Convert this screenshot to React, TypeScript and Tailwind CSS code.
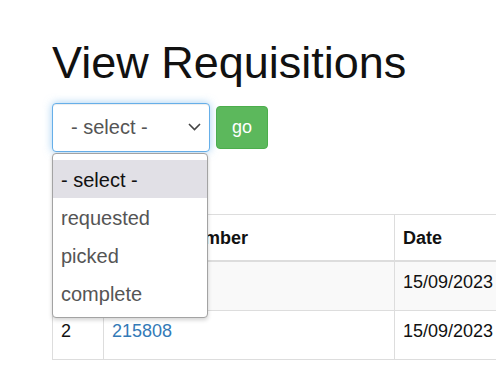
const options = ["- select -", "requested", "picked", "complete"];

const rows = [
  { n: 1, ref: "215809", date: "15/09/2023", status: "requested" },
  { n: 2, ref: "215808", date: "15/09/2023", status: "requested" },
];

function Chevron() {
  return (
    <svg width="13" height="8" viewBox="0 0 13 8" fill="none" className="shrink-0">
      <polyline points="1,1 6.5,6.5 12,1" stroke="#444" strokeWidth="1.6" />
    </svg>
  );
}

export default function App() {
  return (
    <div className="w-full overflow-hidden bg-white font-['Liberation_Sans',Arial,sans-serif] text-[#111]">
      <div className="pl-[52px] pt-[38px] pb-[22px]">
        <h1 className="text-[45px] font-normal leading-[49.5px]">View Requisitions</h1>

        <div className="mt-[15px] flex items-center gap-[6px]">
          <div className="relative">
            <div className="flex h-[49px] w-[158px] items-center justify-between rounded-[4px] border border-[#66afe9] bg-white pl-[18px] pr-[8px] text-[20px] text-[#555] shadow-[inset_0_1px_1px_rgba(0,0,0,0.075),0_0_8px_rgba(102,175,233,0.6)]">
              <span>- select -</span>
              <Chevron />
            </div>
            <ul className="absolute left-0 top-[50px] z-10 w-[156px] rounded-[4px] border border-[#a3a3a3] bg-white pt-[6px] pb-[5px] text-[20px] shadow-[0_2px_4px_rgba(0,0,0,0.18)]">
              {options.map((o, i) => (
                <li
                  key={o}
                  className={
                    i === 0
                      ? "h-[38px] bg-[#e1e0e6] pl-[8px] pt-[1px] leading-[38px] text-[#111]"
                      : "h-[38px] pl-[8px] pt-[1px] leading-[38px] text-[#555]"
                  }
                >
                  {o}
                </li>
              ))}
            </ul>
          </div>
          <button
            type="button"
            className="h-[43px] w-[52px] rounded-[4px] border border-[#4cae4c] bg-[#5cb85c] text-[18px] text-white"
          >
            go
          </button>
        </div>

        <table className="mt-[62px] w-[600px] table-fixed border-collapse text-left text-[18px] leading-[26px]">
          <thead>
            <tr>
              <th className="w-[51px] border border-b-2 border-[#ddd] px-[8px] pt-[10px] pb-[9px] align-bottom font-bold">#</th>
              <th className="w-[291px] border border-b-2 border-[#ddd] px-[8px] pt-[10px] pb-[9px] align-bottom font-bold">Picklist Number</th>
              <th className="w-[140px] border border-b-2 border-[#ddd] px-[8px] pt-[10px] pb-[9px] align-bottom font-bold">Date</th>
              <th className="border border-b-2 border-[#ddd] px-[8px] pt-[10px] pb-[9px] align-bottom font-bold">Status</th>
            </tr>
          </thead>
          <tbody>
            {rows.map((r, i) => (
              <tr key={r.n} className={i % 2 === 0 ? "bg-[#f9f9f9]" : "bg-white"}>
                <td className="border border-[#ddd] px-[8px] pt-[7px] pb-[15px] align-top">{r.n}</td>
                <td className="border border-[#ddd] px-[8px] pt-[7px] pb-[15px] align-top">
                  <a href="#" className="text-[#337ab7]">{r.ref}</a>
                </td>
                <td className="border border-[#ddd] px-[8px] pt-[7px] pb-[15px] align-top">{r.date}</td>
                <td className="border border-[#ddd] px-[8px] pt-[7px] pb-[15px] align-top">{r.status}</td>
              </tr>
            ))}
          </tbody>
        </table>
      </div>
    </div>
  );
}
